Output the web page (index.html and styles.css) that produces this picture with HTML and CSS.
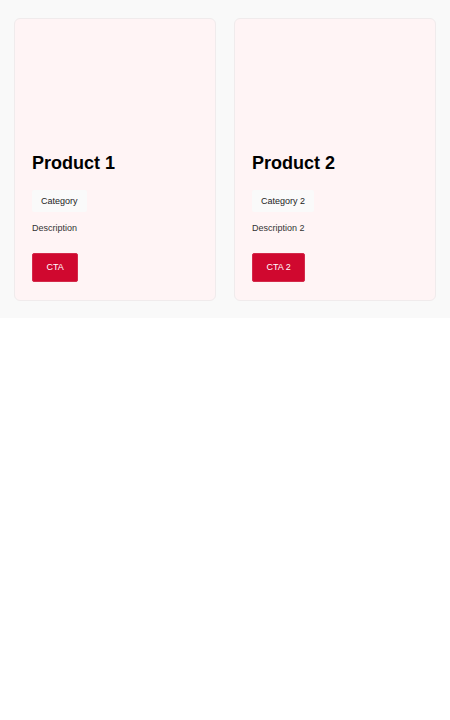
FILE: index.html
```html
<!DOCTYPE html>
<html lang="en">
<head>
<meta charset="utf-8">
<title>Products</title>
<link rel="stylesheet" href="styles.css">
</head>
<body>
<section class="products">
  <article class="card">
    <div class="media"></div>
    <h2 class="title">Product 1</h2>
    <span class="chip">Category</span>
    <p class="desc">Description</p>
    <button class="cta">CTA</button>
  </article>
  <article class="card">
    <div class="media"></div>
    <h2 class="title">Product 2</h2>
    <span class="chip">Category 2</span>
    <p class="desc">Description 2</p>
    <button class="cta">CTA 2</button>
  </article>
</section>
</body>
</html>
```
FILE: styles.css
```css
html, body {
  margin: 0;
  padding: 0;
  background: #ffffff;
  font-family: "Liberation Sans", Arial, sans-serif;
}

.products {
  background: #f9f9f9;
  padding: 18px 14px 17px;
  display: grid;
  grid-template-columns: 1fr 1fr;
  gap: 18px;
}

.card {
  background: #fff4f5;
  border: 1px solid #f0ebec;
  border-radius: 6px;
  padding: 18px 17px;
  display: flex;
  flex-direction: column;
  align-items: flex-start;
}

.media {
  height: 116px;
  align-self: stretch;
}

.title {
  margin: 0;
  font-size: 18px;
  font-weight: 700;
  line-height: 20.7px;
  color: #000;
}

.chip {
  margin-top: 16.5px;
  background: #fafafa;
  color: #222;
  font-size: 9px;
  line-height: 10.5px;
  padding: 5.5px 9px;
  border-radius: 2px;
}

.desc {
  margin: 11px 0 19.5px;
  font-size: 9px;
  line-height: 10.35px;
  color: #333;
}

.cta {
  font-family: "Liberation Sans", Arial, sans-serif;
  background: #d0082f;
  color: #fff;
  border: 1px solid #d42a4a;
  border-radius: 2px;
  font-size: 9px;
  line-height: 10.35px;
  padding: 8.5px 13.5px;
  cursor: pointer;
}
```
